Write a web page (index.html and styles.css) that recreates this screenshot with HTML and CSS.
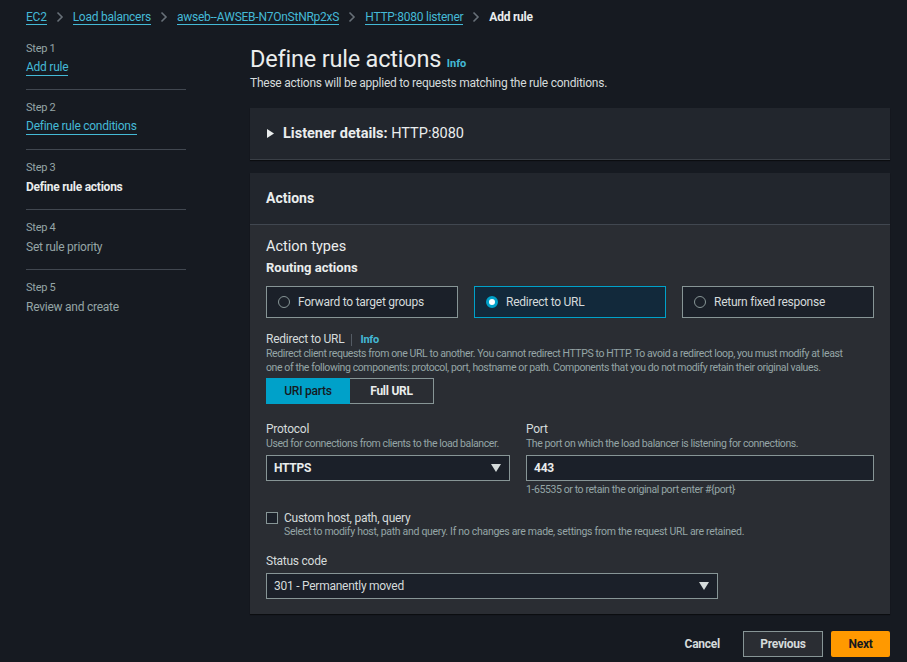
FILE: index.html
```html
<!DOCTYPE html>
<html lang="en">
<head>
<meta charset="utf-8">
<title>Add rule</title>
<link rel="stylesheet" href="styles.css">
</head>
<body>
<div class="breadcrumbs">
  <a class="crumb" href="#">EC2</a>
  <span class="chev"><svg width="8" height="12" viewBox="0 0 8 12"><path d="M1.5 1.5 6 6l-4.5 4.5" fill="none" stroke="#687078" stroke-width="1.6"/></svg></span>
  <a class="crumb" href="#">Load balancers</a>
  <span class="chev"><svg width="8" height="12" viewBox="0 0 8 12"><path d="M1.5 1.5 6 6l-4.5 4.5" fill="none" stroke="#687078" stroke-width="1.6"/></svg></span>
  <a class="crumb" href="#">awseb--AWSEB-N7OnStNRp2xS</a>
  <span class="chev"><svg width="8" height="12" viewBox="0 0 8 12"><path d="M1.5 1.5 6 6l-4.5 4.5" fill="none" stroke="#687078" stroke-width="1.6"/></svg></span>
  <a class="crumb" href="#">HTTP:8080 listener</a>
  <span class="chev"><svg width="8" height="12" viewBox="0 0 8 12"><path d="M1.5 1.5 6 6l-4.5 4.5" fill="none" stroke="#687078" stroke-width="1.6"/></svg></span>
  <span class="crumb-current">Add rule</span>
</div>

<div class="layout">
  <nav class="steps">
    <div class="step first">
      <div class="step-num">Step 1</div>
      <a class="step-link" href="#">Add rule</a>
    </div>
    <div class="step">
      <div class="step-num">Step 2</div>
      <a class="step-link" href="#">Define rule conditions</a>
    </div>
    <div class="step">
      <div class="step-num">Step 3</div>
      <div class="step-title active">Define rule actions</div>
    </div>
    <div class="step">
      <div class="step-num">Step 4</div>
      <div class="step-title">Set rule priority</div>
    </div>
    <div class="step last">
      <div class="step-num">Step 5</div>
      <div class="step-title">Review and create</div>
    </div>
  </nav>

  <main class="main">
    <h1 class="page-title">Define rule actions <a class="info" href="#">Info</a></h1>
    <p class="page-desc">These actions will be applied to requests matching the rule conditions.</p>

    <section class="listener">
      <span class="caret"><svg width="7" height="9" viewBox="0 0 7 9"><path d="M0 0 7 4.5 0 9z" fill="#eaeded"/></svg></span>
      <span class="listener-title"><b>Listener details:</b> HTTP:8080</span>
    </section>

    <section class="actions">
      <div class="actions-head">Actions</div>
      <div class="actions-body">
        <div class="h-action-types">Action types</div>
        <div class="h-routing">Routing actions</div>
        <div class="cards">
          <div class="card"><span class="radio"></span>Forward to target groups</div>
          <div class="card selected"><span class="radio on"></span>Redirect to URL</div>
          <div class="card"><span class="radio"></span>Return fixed response</div>
        </div>

        <div class="redirect-label">Redirect to URL <span class="sep"></span><a class="info" href="#">Info</a></div>
        <div class="redirect-desc">Redirect client requests from one URL to another. You cannot redirect HTTPS to HTTP. To avoid a redirect loop, you must modify at least one of the following components: protocol, port, hostname or path. Components that you do not modify retain their original values.</div>
        <div class="segmented">
          <span class="seg seg-on">URI parts</span>
          <span class="seg">Full URL</span>
        </div>

        <div class="fields">
          <div class="field">
            <div class="f-label">Protocol</div>
            <div class="f-desc">Used for connections from clients to the load balancer.</div>
            <div class="select">HTTPS<span class="tri"><svg width="10" height="8" viewBox="0 0 10 8"><path d="M0 0h10L5 8z" fill="#d5dbdb"/></svg></span></div>
          </div>
          <div class="field">
            <div class="f-label">Port</div>
            <div class="f-desc">The port on which the load balancer is listening for connections.</div>
            <div class="input">443</div>
            <div class="f-hint">1-65535 or to retain the original port enter #{port}</div>
          </div>
        </div>

        <div class="check-row">
          <span class="checkbox"></span>
          <div>
            <div class="check-label">Custom host, path, query</div>
            <div class="check-desc">Select to modify host, path and query. If no changes are made, settings from the request URL are retained.</div>
          </div>
        </div>

        <div class="f-label status-label">Status code</div>
        <div class="select status">301 - Permanently moved<span class="tri"><svg width="10" height="8" viewBox="0 0 10 8"><path d="M0 0h10L5 8z" fill="#d5dbdb"/></svg></span></div>
      </div>
    </section>

    <div class="buttons">
      <span class="btn-link">Cancel</span>
      <span class="btn btn-normal">Previous</span>
      <span class="btn btn-primary">Next</span>
    </div>
  </main>
</div>
</body>
</html>
```
FILE: styles.css
```css
* { box-sizing: border-box; }
html, body { margin: 0; padding: 0; }
body {
  background: #161a21;
  color: #d5dbdb;
  font-family: Roboto, "Liberation Sans", sans-serif;
  font-size: 12px;
  letter-spacing: -0.25px;
  font-variant-ligatures: none;
  width: 907px;
  height: 662px;
  overflow: hidden;
}
a { color: #44b9d6; text-decoration: none; }

.breadcrumbs {
  height: 34px;
  display: flex;
  align-items: center;
  padding-left: 26px;
  font-size: 12px;
  font-kerning: none;
}
.crumb { color: #44b9d6; border-bottom: 1px solid #44b9d6; line-height: 14px; }
.chev { display: inline-flex; width: 26px; justify-content: center; }
.chev svg { display: block; }
.crumb-current { color: #eaeded; font-weight: 700; }

.layout { display: flex; padding-left: 26px; }
.steps { width: 160px; flex: none; margin-right: 64px; }
.step { padding-top: 10px; padding-bottom: 14px; border-bottom: 1px solid #414750; }
.step.first { padding-top: 7px; padding-bottom: 13px; }
.step.last { border-bottom: none; }
.step-num { font-size: 11px; line-height: 16px; color: #95a5a6; }
.step-link, .step-title { display: inline-block; margin-top: 3px; font-size: 12px; line-height: 16px; }
.step-link { color: #44b9d6; border-bottom: 1px solid #44b9d6; line-height: 15px; }
.step-title { color: #95a5a6; }
.step-title.active { color: #eaeded; font-weight: 700; }

.main { width: 640px; flex: none; padding-top: 11px; }
.page-title {
  margin: 0;
  font-size: 23.5px;
  line-height: 28px;
  font-weight: 400;
  letter-spacing: -0.2px;
  color: #eaeded;
}
.page-title .info { line-height: 1; letter-spacing: 0; }
.info { font-size: 11px; font-weight: 700; }
.page-desc { margin: 2px 0 0; line-height: 16px; color: #d5dbdb; }

.listener {
  margin-top: 17px;
  height: 52px;
  background: #22262d;
  border-bottom: 1px solid #3a3f46;
  display: flex;
  align-items: center;
  padding-left: 17px;
  box-shadow: 0 1px 1px rgba(0,0,0,0.5);
}
.caret { width: 16px; display: inline-flex; }
.listener-title { font-size: 14.5px; letter-spacing: 0; color: #eaeded; }
.listener-title b { font-weight: 700; }

.actions { margin-top: 13px; background: #2a2d33; box-shadow: 0 1px 1px rgba(0,0,0,0.5); }
.actions-head {
  height: 52px;
  background: #22262d;
  border-bottom: 1px solid #414750;
  display: flex;
  align-items: center;
  padding-left: 16px;
  padding-bottom: 2px;
  font-size: 14px;
  letter-spacing: 0;
  font-weight: 700;
  color: #eaeded;
}
.actions-body { padding: 12px 16px 15px; }
.h-action-types { font-size: 14.5px; letter-spacing: 0; line-height: 20px; color: #eaeded; }
.h-routing { margin-top: 2px; font-size: 13px; letter-spacing: 0; line-height: 18px; font-weight: 700; color: #eaeded; }

.cards { margin-top: 9px; display: grid; grid-template-columns: repeat(3, 192px); gap: 16px; }
.card {
  height: 32px;
  border: 1px solid #879596;
  background: #1b2029;
  display: flex;
  align-items: center;
  padding-left: 11px;
  color: #d5dbdb;
}
.card.selected { border-color: #00a1c9; background: #12293b; }
.radio {
  width: 12px; height: 12px; border-radius: 50%;
  border: 1px solid #879596;
  margin-right: 8px;
  flex: none;
}
.radio.on { border: 3.5px solid #00a1c9; background: #fff; }

.redirect-label { margin-top: 14px; line-height: 15px; color: #d5dbdb; display: flex; align-items: center; }
.sep { display: inline-block; width: 1px; height: 12px; background: #545b64; margin: 0 8px 0 7px; }
.redirect-desc { max-width: 592px; font-size: 10.5px; letter-spacing: -0.4px; line-height: 14px; color: #95a5a6; }

.segmented { margin-top: 3px; display: inline-flex; border: 1px solid #879596; height: 26px; }
.seg { width: 83px; display: flex; align-items: center; justify-content: center; font-weight: 700; color: #eaeded; }
.seg-on { width: 84px; background: #00a1c9; color: #16191f; font-weight: 500; margin: -1px 0 -1px -1px; height: 26px; }

.fields { margin-top: 18px; display: grid; grid-template-columns: 244px 1fr; gap: 16px; }
.f-label { line-height: 15px; color: #d5dbdb; }
.f-desc { font-size: 10.5px; letter-spacing: -0.4px; line-height: 13px; color: #95a5a6; white-space: nowrap; }
.select, .input {
  margin-top: 5px;
  height: 26px;
  border: 1px solid #879596;
  background: #1b2029;
  display: flex;
  align-items: center;
  padding-left: 7px;
  color: #eaeded;
}
.field .select { font-weight: 700; }
.input { font-weight: 700; }
.tri { margin-left: auto; margin-right: 8px; display: inline-flex; }
.f-hint { margin-top: 2px; font-size: 10.5px; letter-spacing: -0.4px; line-height: 14px; color: #95a5a6; }

.check-row { margin-top: 13px; display: flex; }
.checkbox { width: 12px; height: 12px; border: 1px solid #879596; background: #1b2029; margin: 2px 6px 0 0; flex: none; }
.check-label { line-height: 16px; color: #d5dbdb; }
.check-desc { font-size: 10.5px; letter-spacing: -0.3px; line-height: 14px; color: #95a5a6; margin-top: -1px; }

.status-label { margin-top: 14px; line-height: 16px; }
.select.status { margin-top: 4px; width: 452px; font-weight: 400; color: #d5dbdb; }

.buttons { margin-top: 17px; display: flex; justify-content: flex-end; align-items: center; gap: 8px; }
.btn-link { font-weight: 700; color: #d5dbdb; margin-right: 15px; }
.btn { height: 26px; display: inline-flex; align-items: center; justify-content: center; font-weight: 700; }
.btn-normal { width: 80px; border: 1px solid #879596; background: #2a2d33; color: #d5dbdb; }
.btn-primary { width: 59px; background: #ff9900; color: #16191f; border-radius: 2px; }
```
